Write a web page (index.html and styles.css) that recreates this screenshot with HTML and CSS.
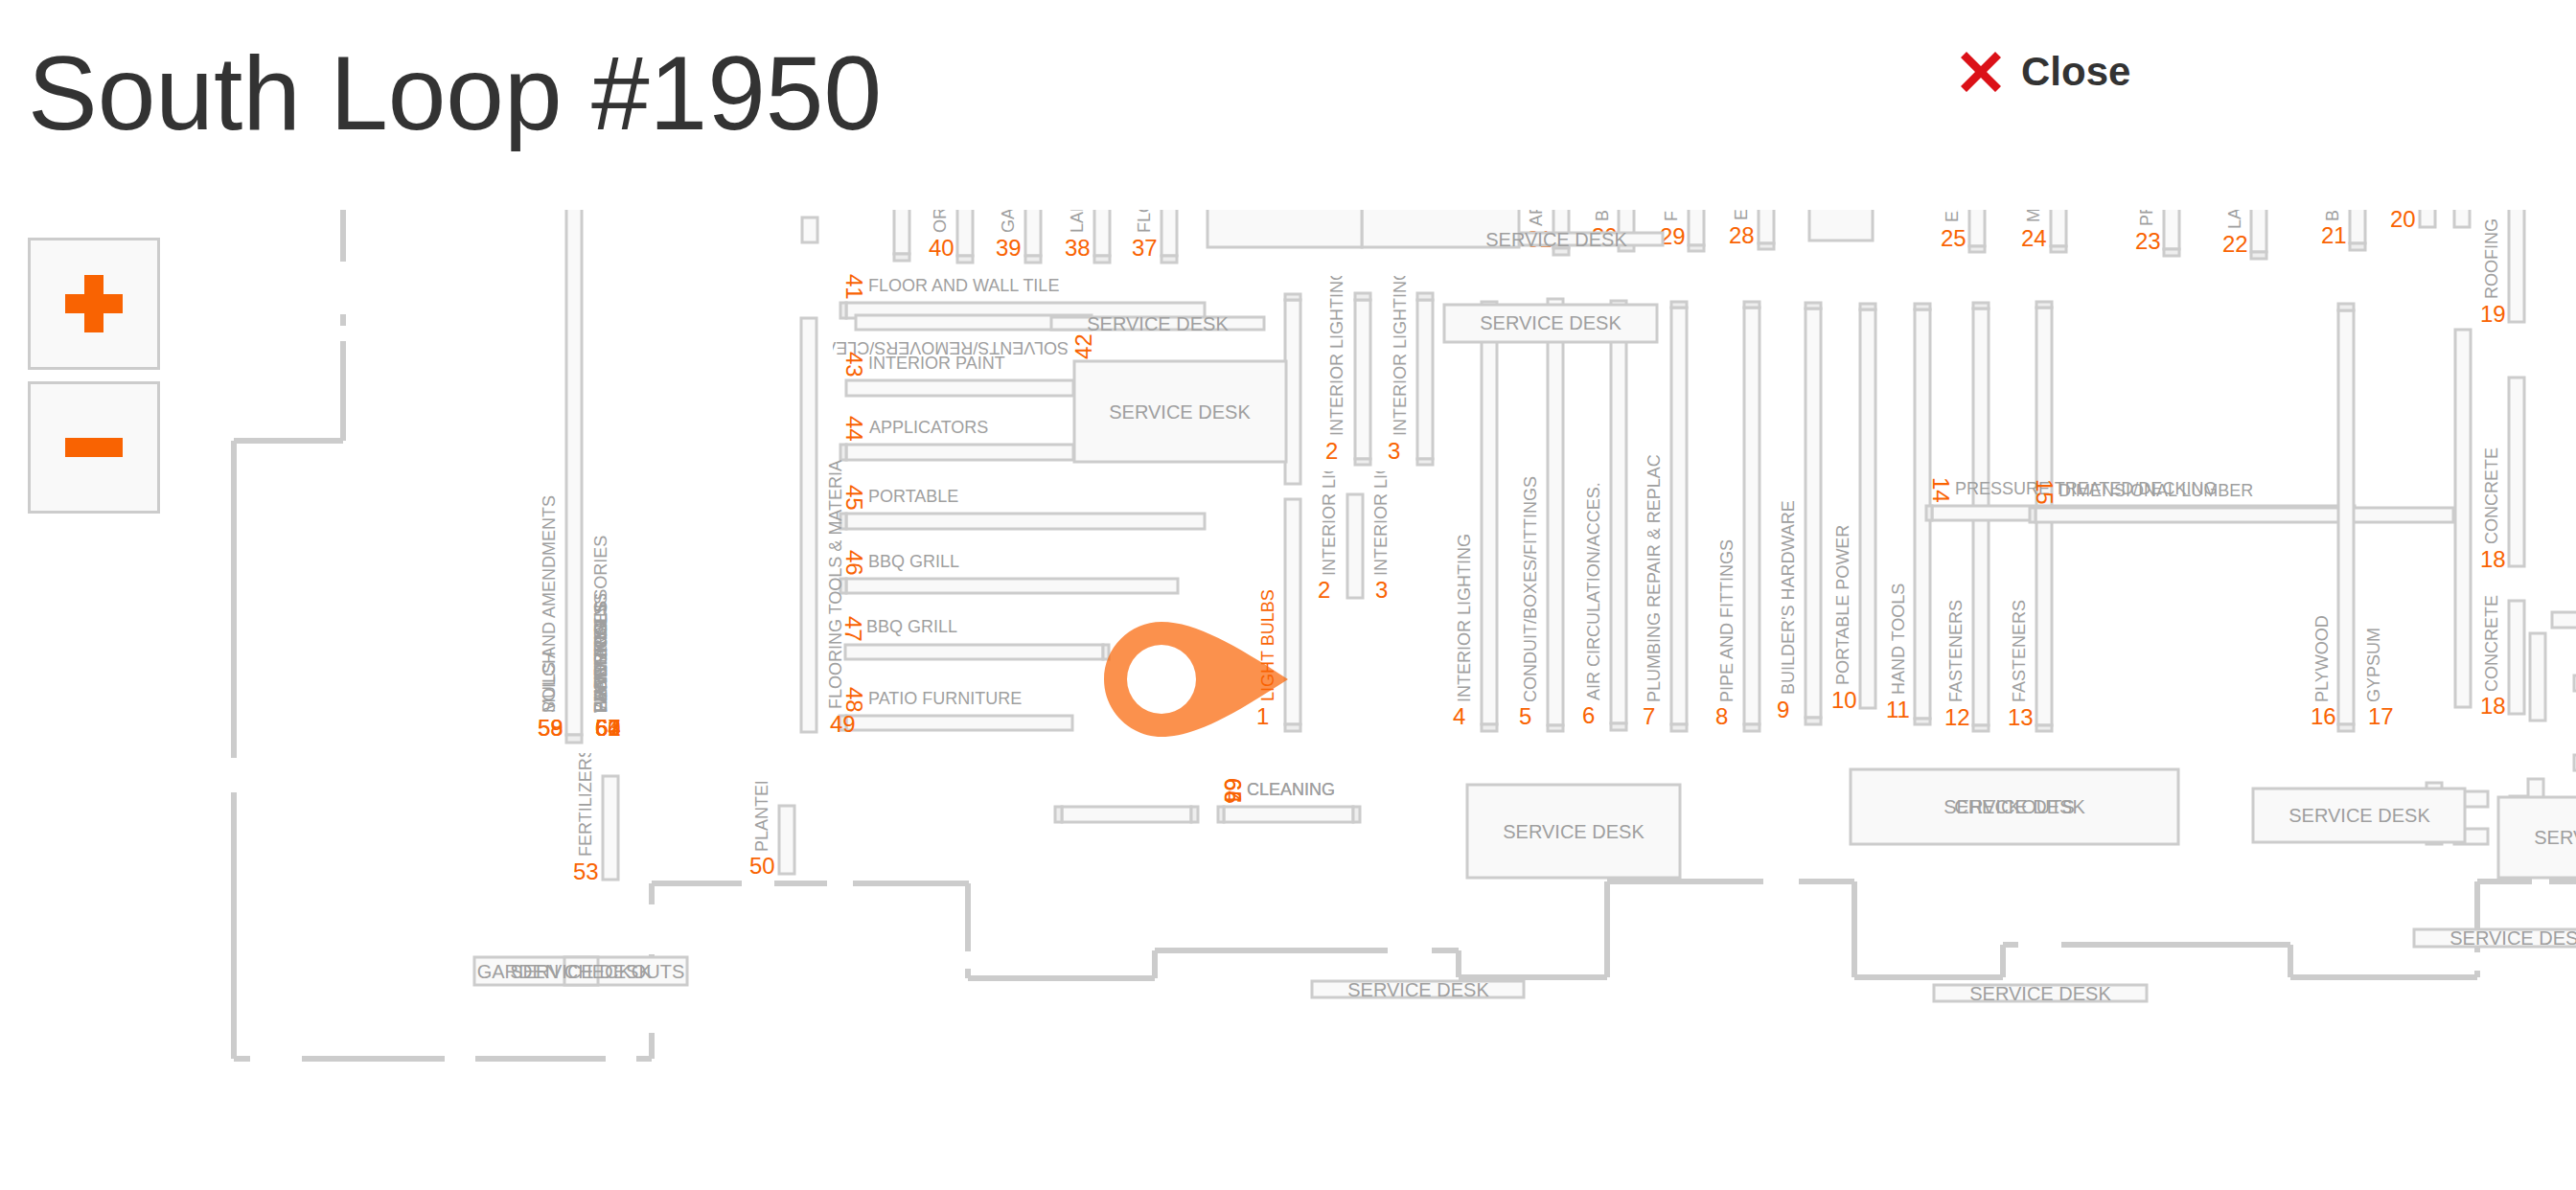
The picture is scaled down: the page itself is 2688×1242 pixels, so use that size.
FILE: index.html
```html
<!DOCTYPE html>
<html lang="en">
<head>
<meta charset="utf-8">
<meta name="viewport" content="width=device-width, initial-scale=1">
<title>South Loop #1950</title>
<link rel="stylesheet" href="styles.css">
</head>
<body>
<header class="store-header">
  <h1 class="store-name">South Loop #1950</h1>
  <button class="close" type="button">
    <svg class="close-icon" viewBox="0 0 42 42" aria-hidden="true"><path d="M6 0 21 15 36 0 42 6 27 21 42 36 36 42 21 27 6 42 0 36 15 21 0 6z"/></svg>
    Close
  </button>
</header>

<main class="map">
  <svg class="plan" viewBox="0 219 2688 1023" role="img" aria-label="Store floor plan">
    <!-- Outer walls, with gaps for the doors -->
    <path class="wall" d="M358 219V273M358 328V340M358 356V460M358 460H244M244 460V791M244 827V1105M244 1105H261M315 1105H464M496 1105H632M664 1105H680M680 1105V1078M680 1028V996M680 944V922M680 922H774M808 922H863M890 922H1011M1010 922V993M1010 1011V1021M1010 1021H1205M1205 1021V992M1205 992H1448M1494 992H1522M1522 992V1020M1522 1020H1677M1677 1020V920M1677 920H1840M1877 920H1935M1935 920V1020M1935 1020H2090M2090 1020V986M2090 986H2106M2151 986H2390M2390 986V1020M2390 1020H2585M2585 1020V1013M2585 994V920M2585 920H2642M2660 920H2688"/>

    <!-- Garden side -->
    <g class="shelf">
      <rect x="591" y="200" width="16" height="567"/>
      <rect class="cap" x="591" y="767" width="16" height="8"/>
      <rect x="629" y="810" width="16" height="108"/>
      <rect x="813" y="841" width="16" height="71"/>
      <rect x="837" y="227" width="16" height="26"/>
      <rect x="836" y="332" width="16" height="432"/>
    </g>

    <!-- Back row, cut off by the top of the map -->
    <g class="shelf">
      <rect x="933" y="200" width="16" height="65"/><rect class="cap" x="933" y="265" width="16" height="7"/>
      <rect x="999" y="200" width="16" height="67"/><rect class="cap" x="999" y="267" width="16" height="7"/>
      <rect x="1070" y="200" width="16" height="67"/><rect class="cap" x="1070" y="267" width="16" height="7"/>
      <rect x="1142" y="200" width="16" height="67"/><rect class="cap" x="1142" y="267" width="16" height="7"/>
      <rect x="1212" y="200" width="16" height="67"/><rect class="cap" x="1212" y="267" width="16" height="7"/>
      <rect x="1621" y="200" width="16" height="59"/><rect class="cap" x="1621" y="259" width="16" height="7"/>
      <rect x="1689" y="200" width="16" height="55"/><rect class="cap" x="1689" y="255" width="16" height="7"/>
      <rect x="1762" y="200" width="16" height="56"/><rect class="cap" x="1762" y="256" width="16" height="6"/>
      <rect x="1835" y="200" width="16" height="54"/><rect class="cap" x="1835" y="254" width="16" height="6"/>
      <rect x="1888" y="200" width="66" height="51"/>
      <rect x="2055" y="200" width="16" height="57"/><rect class="cap" x="2055" y="257" width="16" height="6"/>
      <rect x="2140" y="200" width="16" height="57"/><rect class="cap" x="2140" y="257" width="16" height="6"/>
      <rect x="2258" y="200" width="16" height="60"/><rect class="cap" x="2258" y="260" width="16" height="7"/>
      <rect x="2349" y="200" width="16" height="63"/><rect class="cap" x="2349" y="263" width="16" height="7"/>
      <rect x="2452" y="200" width="16" height="54"/><rect class="cap" x="2452" y="254" width="16" height="7"/>
      <rect x="2525" y="200" width="16" height="37"/>
      <rect x="2561" y="200" width="16" height="37"/>
      <rect x="2618" y="200" width="16" height="136"/>
    </g>

    <!-- Aisles 41 to 48 -->
    <g class="shelf">
      <rect x="883" y="316" width="374" height="16"/><rect class="cap" x="877" y="316" width="6" height="16"/>
      <rect x="893" y="329" width="246" height="15"/>
      <rect x="883" y="397" width="237" height="16"/>
      <rect x="883" y="464" width="237" height="16"/><rect class="cap" x="877" y="464" width="6" height="16"/>
      <rect x="883" y="536" width="374" height="16"/><rect class="cap" x="877" y="536" width="6" height="16"/>
      <rect x="883" y="604" width="346" height="15"/><rect class="cap" x="877" y="604" width="6" height="15"/>
      <rect x="882" y="673" width="269" height="15"/><rect class="cap" x="1151" y="673" width="6" height="15"/>
      <rect x="883" y="747" width="236" height="15"/><rect class="cap" x="876" y="747" width="7" height="15"/>
      <rect x="1108" y="842" width="135" height="16"/><rect class="cap" x="1101" y="842" width="7" height="16"/><rect class="cap" x="1243" y="842" width="7" height="16"/>
      <rect x="1277" y="842" width="135" height="16"/><rect class="cap" x="1271" y="842" width="6" height="16"/><rect class="cap" x="1412" y="842" width="7" height="16"/>
    </g>

    <!-- Aisles 1 to 13 -->
    <g class="shelf">
      <rect x="1341" y="313" width="16" height="192"/><rect class="cap" x="1341" y="307" width="16" height="6"/>
      <rect x="1341" y="521" width="16" height="235"/><rect class="cap" x="1341" y="756" width="16" height="7"/>
      <rect x="1414" y="313" width="16" height="166"/><rect class="cap" x="1414" y="306" width="16" height="7"/><rect class="cap" x="1414" y="479" width="16" height="6"/>
      <rect x="1479" y="313" width="16" height="166"/><rect class="cap" x="1479" y="306" width="16" height="7"/><rect class="cap" x="1479" y="479" width="16" height="6"/>
      <rect x="1406" y="516" width="16" height="108"/>
      <rect x="1546" y="315" width="16" height="441"/><rect class="cap" x="1546" y="756" width="16" height="7"/>
      <rect x="1615" y="312" width="16" height="445"/><rect class="cap" x="1615" y="757" width="16" height="6"/>
      <rect x="1681" y="314" width="16" height="441"/><rect class="cap" x="1681" y="755" width="16" height="7"/>
      <rect x="1744" y="321" width="16" height="435"/><rect class="cap" x="1744" y="315" width="16" height="6"/><rect class="cap" x="1744" y="756" width="16" height="7"/>
      <rect x="1820" y="321" width="16" height="435"/><rect class="cap" x="1820" y="315" width="16" height="6"/><rect class="cap" x="1820" y="756" width="16" height="7"/>
      <rect x="1884" y="322" width="16" height="427"/><rect class="cap" x="1884" y="316" width="16" height="6"/><rect class="cap" x="1884" y="749" width="16" height="7"/>
      <rect x="1941" y="323" width="16" height="416"/><rect class="cap" x="1941" y="317" width="16" height="6"/>
      <rect x="1998" y="323" width="16" height="427"/><rect class="cap" x="1998" y="317" width="16" height="6"/><rect class="cap" x="1998" y="750" width="16" height="6"/>
      <rect x="2059" y="322" width="16" height="435"/><rect class="cap" x="2059" y="316" width="16" height="6"/><rect class="cap" x="2059" y="757" width="16" height="6"/>
      <rect x="2125" y="321" width="16" height="436"/><rect class="cap" x="2125" y="315" width="16" height="6"/><rect class="cap" x="2125" y="757" width="16" height="6"/>
    </g>

    <!-- Lumber, aisles 14 to 19 -->
    <g class="shelf">
      <rect x="2016" y="528" width="441" height="15"/><rect class="cap" x="2010" y="528" width="6" height="15"/>
      <rect x="2124" y="530" width="436" height="15"/><rect class="cap" x="2118" y="530" width="6" height="15"/>
      <rect x="2440" y="324" width="16" height="432"/><rect class="cap" x="2440" y="317" width="16" height="7"/><rect class="cap" x="2440" y="756" width="16" height="7"/>
      <rect x="2562" y="344" width="16" height="394"/>
      <rect x="2618" y="394" width="16" height="197"/>
      <rect x="2618" y="627" width="16" height="118"/>
      <rect x="2640" y="661" width="16" height="91"/>
      <rect x="2663" y="639" width="60" height="16"/>
      <rect x="2686" y="705" width="60" height="16"/>
      <rect x="2686" y="788" width="60" height="16"/>
      <rect x="2532" y="817" width="16" height="64"/>
      <rect x="2540" y="826" width="56" height="16"/>
      <rect x="2561" y="865" width="35" height="16"/>
      <rect x="2619" y="831" width="20" height="16"/>
      <rect x="2638" y="813" width="16" height="40"/>
    </g>

    <!-- Department names -->
    <g class="dept">
      <text transform="translate(579 744) rotate(-90)">MULCH</text>
      <text transform="translate(579 744) rotate(-90)">SOILS AND AMENDMENTS</text>
      <text transform="translate(633 744) rotate(-90)">LAWN ACCESSORIES</text>
      <text transform="translate(633 744) rotate(-90)">EVERGREENS</text>
      <text transform="translate(633 744) rotate(-90)">PERENNIALS</text>
      <text transform="translate(633 744) rotate(-90)">FLOWERS</text>
      <text transform="translate(633 744) rotate(-90)">HAND TOOLS</text>
      <text transform="translate(633 744) rotate(-90)">PLANTERS</text>
      <text transform="translate(633 744) rotate(-90)">WATERING</text>
      <svg x="590" y="786" width="40" height="112" viewBox="590 786 40 112"><text transform="translate(617 894) rotate(-90)">FERTILIZERS</text></svg>
      <svg x="780" y="816" width="30" height="76" viewBox="780 816 30 76"><text transform="translate(801 889) rotate(-90)">PLANTERS</text></svg>

      <text transform="translate(987 243) rotate(-90)">ORGANIZATION</text>
      <text transform="translate(1058 243) rotate(-90)">GARAGE</text>
      <text transform="translate(1130 243) rotate(-90)">LAMINATE</text>
      <text transform="translate(1200 243) rotate(-90)">FLOORING</text>
      <text transform="translate(1609 236) rotate(-90)">APPLIANCES</text>
      <text transform="translate(1678 231) rotate(-90)">BATH</text>
      <text transform="translate(1750 231) rotate(-90)">FLOORING</text>
      <text transform="translate(1823 230) rotate(-90)">ELECTRICAL</text>
      <text transform="translate(2043 232) rotate(-90)">EXTERIOR</text>
      <text transform="translate(2128 232) rotate(-90)">MOULDING</text>
      <text transform="translate(2246 236) rotate(-90)">PREHUNG</text>
      <text transform="translate(2338 239) rotate(-90)">LADDERS</text>
      <text transform="translate(2440 231) rotate(-90)">BLOCK</text>

      <text x="906" y="304">FLOOR AND WALL TILE</text>
      <svg x="869" y="350" width="250" height="30" viewBox="869 350 250 30"><text transform="translate(1115 357) rotate(180)">SOLVENTS/REMOVERS/CLEANERS</text></svg>
      <text x="906" y="385">INTERIOR PAINT</text>
      <text x="907" y="452">APPLICATORS</text>
      <text x="906" y="524">PORTABLE</text>
      <text x="906" y="592">BBQ GRILL</text>
      <text x="904" y="660">BBQ GRILL</text>
      <text x="906" y="735">PATIO FURNITURE</text>
      <text transform="translate(878 740) rotate(-90)">FLOORING TOOLS &amp; MATERIA</text>
      <text x="1301" y="830">CLEANING</text>
      <text x="1301" y="830">CLEANING</text>

      <text class="picked" transform="translate(1329 732) rotate(-90)">LIGHT BULBS</text>
      <svg x="1380" y="288" width="30" height="170" viewBox="1380 288 30 170"><text transform="translate(1401 455) rotate(-90)">INTERIOR LIGHTING</text></svg>
      <svg x="1446" y="288" width="30" height="170" viewBox="1446 288 30 170"><text transform="translate(1467 455) rotate(-90)">INTERIOR LIGHTING</text></svg>
      <svg x="1370" y="492" width="30" height="112" viewBox="1370 492 30 112"><text transform="translate(1393 601) rotate(-90)">INTERIOR LIGHTING</text></svg>
      <svg x="1426" y="492" width="30" height="112" viewBox="1426 492 30 112"><text transform="translate(1447 601) rotate(-90)">INTERIOR LIGHTING</text></svg>
      <text transform="translate(1534 733) rotate(-90)">INTERIOR LIGHTING</text>
      <text transform="translate(1603 733) rotate(-90)">CONDUIT/BOXES/FITTINGS</text>
      <text transform="translate(1669 731) rotate(-90)">AIR CIRCULATION/ACCES.</text>
      <text transform="translate(1732 733) rotate(-90)">PLUMBING REPAIR &amp; REPLAC</text>
      <text transform="translate(1808 733) rotate(-90)">PIPE AND FITTINGS</text>
      <text transform="translate(1872 725) rotate(-90)">BUILDER'S HARDWARE</text>
      <text transform="translate(1929 715) rotate(-90)">PORTABLE POWER</text>
      <text transform="translate(1987 725) rotate(-90)">HAND TOOLS</text>
      <text transform="translate(2047 733) rotate(-90)">FASTENERS</text>
      <text transform="translate(2113 733) rotate(-90)">FASTENERS</text>
      <text x="2040" y="516">PRESSURE TREATED/DECKING</text>
      <text x="2148" y="518">DIMENSIONAL LUMBER</text>
      <text transform="translate(2429 733) rotate(-90)">PLYWOOD</text>
      <text transform="translate(2483 733) rotate(-90)">GYPSUM</text>
      <text transform="translate(2606 568) rotate(-90)">CONCRETE</text>
      <text transform="translate(2606 722) rotate(-90)">CONCRETE</text>
      <text transform="translate(2606 312) rotate(-90)">ROOFING</text>
    </g>

    <!-- Aisle numbers -->
    <g class="aisle">
      <text x="561" y="768">58</text><text x="561" y="768">59</text>
      <text x="621" y="768">60</text><text x="621" y="768">61</text><text x="621" y="768">62</text><text x="621" y="768">57</text><text x="621" y="768">64</text><text x="621" y="768">63</text>
      <text x="598" y="918">53</text>
      <text x="782" y="912">50</text>
      <text x="969" y="267">40</text>
      <text x="1039" y="267">39</text>
      <text x="1111" y="267">38</text>
      <text x="1181" y="267">37</text>
      <text x="1593" y="258">31</text>
      <text x="1661" y="255">30</text>
      <text x="1732" y="255">29</text>
      <text x="1804" y="254">28</text>
      <text x="2025" y="257">25</text>
      <text x="2109" y="257">24</text>
      <text x="2228" y="260">23</text>
      <text x="2319" y="263">22</text>
      <text x="2422" y="254">21</text>
      <text x="2494" y="237">20</text>
      <text transform="translate(883 286) rotate(90)">41</text>
      <text transform="translate(1139 375) rotate(-90)">42</text>
      <text transform="translate(883 367) rotate(90)">43</text>
      <text transform="translate(883 434) rotate(90)">44</text>
      <text transform="translate(883 506) rotate(90)">45</text>
      <text transform="translate(883 574) rotate(90)">46</text>
      <text transform="translate(882 643) rotate(90)">47</text>
      <text transform="translate(883 717) rotate(90)">48</text>
      <text x="866" y="764">49</text>
      <text transform="translate(1278 812) rotate(90)">64</text>
      <text transform="translate(1278 812) rotate(90)">65</text>
      <text transform="translate(1278 812) rotate(90)">66</text>
      <text x="1311" y="756">1</text>
      <text x="1383" y="479">2</text>
      <text x="1448" y="479">3</text>
      <text x="1375" y="624">2</text>
      <text x="1435" y="624">3</text>
      <text x="1516" y="756">4</text>
      <text x="1585" y="756">5</text>
      <text x="1651" y="755">6</text>
      <text x="1714" y="756">7</text>
      <text x="1790" y="756">8</text>
      <text x="1854" y="749">9</text>
      <text x="1911" y="739">10</text>
      <text x="1968" y="749">11</text>
      <text x="2029" y="757">12</text>
      <text x="2095" y="757">13</text>
      <text transform="translate(2017 498) rotate(90)">14</text>
      <text transform="translate(2125 500) rotate(90)">15</text>
      <text x="2411" y="756">16</text>
      <text x="2471" y="756">17</text>
      <text x="2588" y="592">18</text>
      <text x="2588" y="745">18</text>
      <text x="2588" y="336">19</text>
    </g>

    <!-- Service desks and checkouts -->
    <g class="shelf">
      <rect x="1513" y="243" width="222" height="13"/>
      <rect x="1421" y="200" width="164" height="58"/>
      <rect x="1260" y="200" width="161" height="58"/>
      <rect x="1097" y="331" width="222" height="13"/>
      <rect x="1121" y="377" width="221" height="105"/>
      <rect x="1507" y="318" width="222" height="39"/>
      <rect x="1531" y="819" width="222" height="97"/>
      <rect x="1931" y="803" width="342" height="78"/>
      <rect x="2351" y="823" width="221" height="56"/>
      <rect x="2607" y="832" width="222" height="84"/>
      <rect x="1369" y="1024" width="221" height="17"/>
      <rect x="2018" y="1028" width="222" height="17"/>
      <rect x="2519" y="970" width="222" height="18"/>
      <rect x="495" y="999" width="222" height="29"/>
      <rect x="589" y="999" width="35" height="29"/>
    </g>
    <g class="desk">
      <text x="1624" y="257">SERVICE DESK</text>
      <text x="1208" y="345">SERVICE DESK</text>
      <text x="1231" y="437">SERVICE DESK</text>
      <text x="1618" y="344">SERVICE DESK</text>
      <text x="1642" y="875">SERVICE DESK</text>
      <text x="2102" y="849">CHECKOUTS</text>
      <text x="2102" y="849">SERVICE DESK</text>
      <text x="2462" y="858">SERVICE DESK</text>
      <text x="2718" y="881">SERVICE DESK</text>
      <text x="1480" y="1040">SERVICE DESK</text>
      <text x="2129" y="1044">SERVICE DESK</text>
      <text x="2630" y="986">SERVICE DESK</text>
      <text x="606" y="1021">GARDEN CHECKOUTS</text>
      <text x="606" y="1021">SERVICE DESK</text>
    </g>

    <!-- Item location -->
    <path class="pin" fill-rule="evenodd" d="M1212 649C1248 649 1290 674 1344 709 1290 744 1248 769 1212 769 1179 769 1152 742 1152 709 1152 676 1179 649 1212 649zM1212 673a36 36 0 1 0 0 72 36 36 0 1 0 0-72z"/>
  </svg>

  <div class="zoom">
    <button class="zoom-button" type="button" aria-label="Zoom in">
      <svg class="zoom-icon" viewBox="0 0 60 60" aria-hidden="true"><path d="M20 0H40V20H60V40H40V60H20V40H0V20H20z"/></svg>
    </button>
    <button class="zoom-button" type="button" aria-label="Zoom out">
      <svg class="zoom-icon" viewBox="0 0 60 60" aria-hidden="true"><path d="M0 20H60V40H0z"/></svg>
    </button>
  </div>
</main>
</body>
</html>
```
FILE: styles.css
```css
* {
  box-sizing: border-box;
}

body {
  margin: 0;
  background: #fff;
  color: #333;
  font-family: "Liberation Sans", Arial, Helvetica, sans-serif;
}

.store-header {
  display: grid;
  grid-template-columns: 3fr 1fr;
  align-items: start;
  padding: 33px 0 58px;
}

.store-name {
  margin: 0;
  padding-left: 29px;
  font-size: 109px;
  font-weight: 400;
  line-height: 128px;
}

.close {
  display: flex;
  align-items: center;
  justify-self: start;
  gap: 21px;
  margin-top: 17px;
  padding: 0 30px;
  border: 0;
  background: none;
  color: inherit;
  font: 700 42px/50px "Liberation Sans", Arial, Helvetica, sans-serif;
  cursor: pointer;
}

.close-icon {
  width: 42px;
  height: 42px;
  fill: #db1118;
}

.map {
  position: relative;
}

.plan {
  display: block;
  width: 100%;
  height: auto;
}

.wall {
  fill: none;
  stroke: #ccc;
  stroke-width: 6px;
}

.shelf {
  fill: #f9f9f9;
  stroke: #ccc;
  stroke-width: 3px;
}

.cap {
  fill: #eee;
}

.dept {
  fill: #9f9f9f;
  font-size: 18px;
}

.dept .picked {
  fill: #f96302;
}

.desk {
  fill: #9f9f9f;
  font-size: 20px;
  text-anchor: middle;
}

.aisle {
  fill: #f96302;
  font-size: 24px;
}

.pin {
  fill: #f96302;
  fill-opacity: 0.7;
}

.zoom {
  position: absolute;
  top: 29px;
  left: 29px;
  display: grid;
  gap: 12px;
}

.zoom-button {
  display: grid;
  place-items: center;
  width: 138px;
  height: 138px;
  padding: 0;
  border: 3px solid #ccc;
  background: #f9f9f9;
  cursor: pointer;
}

.zoom-icon {
  width: 60px;
  height: 60px;
  fill: #f96302;
}
```
